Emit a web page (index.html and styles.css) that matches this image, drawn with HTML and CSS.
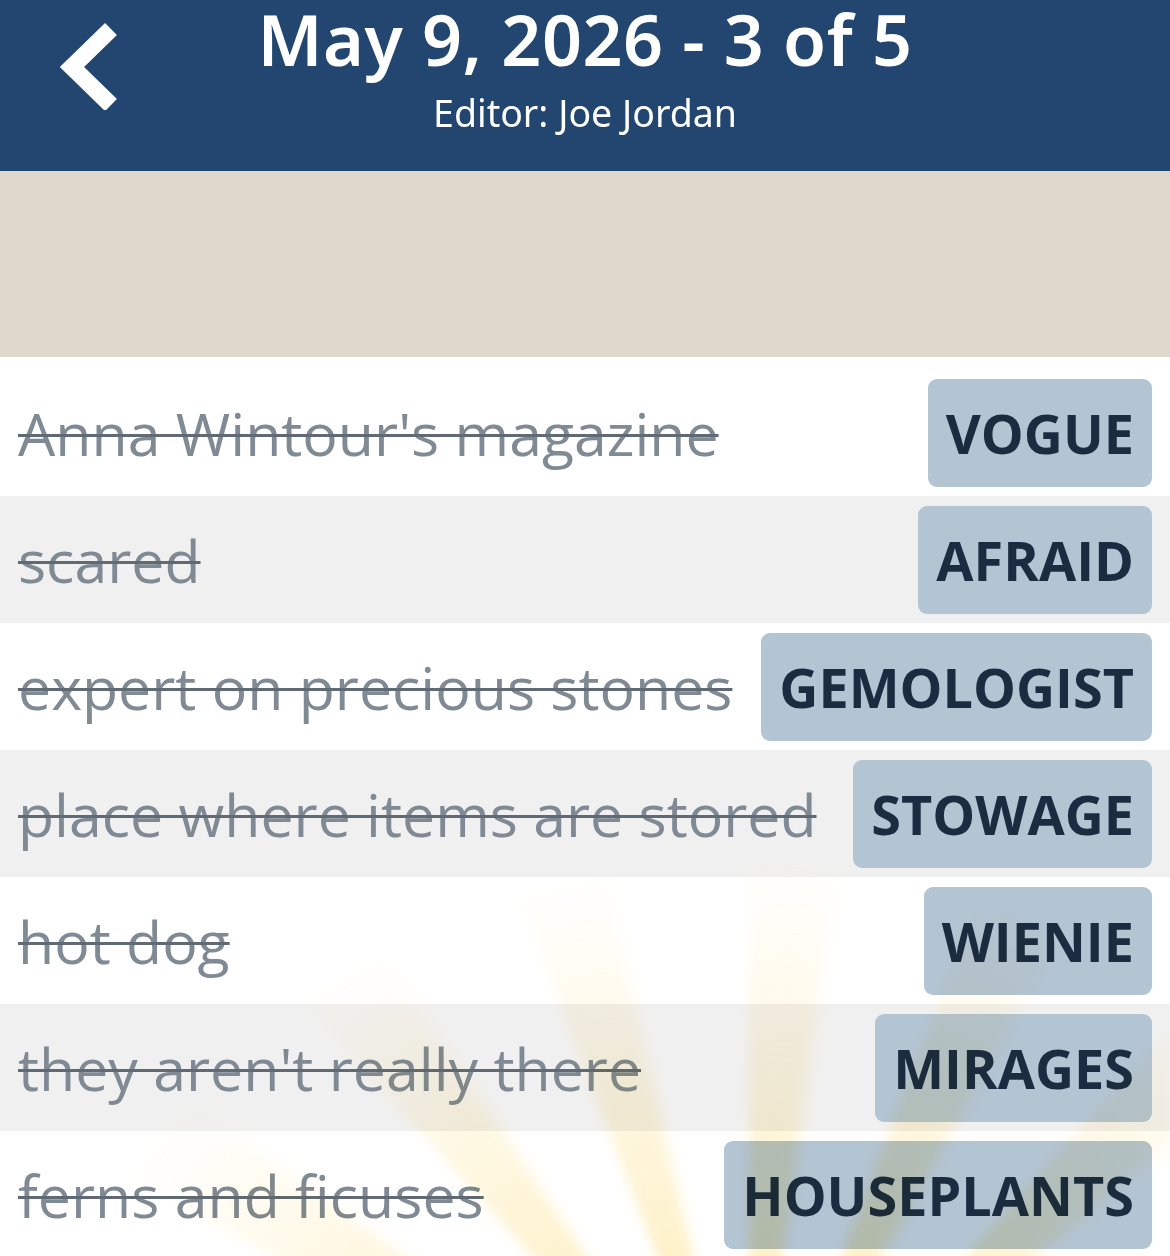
FILE: index.html
```html
<!DOCTYPE html>
<html lang="en">
<head>
    <meta charset="UTF-8">
    <title>Puzzle Review</title>
    <link rel="stylesheet" href="styles.css">
</head>
<body>
    <!-- Top bar with back arrow and puzzle info -->
    <header class="topbar">
        <a class="back" href="#">
            <svg width="70" height="100" viewBox="0 0 70 100">
                <polyline points="56,19 17,57 56,95" fill="none" stroke="#fff" stroke-width="17" stroke-linejoin="miter"/>
            </svg>
        </a>
        <div class="titles">
            <h1>May 9, 2026 - 3 of 5</h1>
            <p>Editor: Joe Jordan</p>
        </div>
    </header>

    <div class="banner"></div>

    <div class="answers">
        <div class="row"><span class="clue">Anna Wintour's magazine</span><span class="word">VOGUE</span></div>
        <div class="row"><span class="clue">scared</span><span class="word">AFRAID</span></div>
        <div class="row"><span class="clue">expert on precious stones</span><span class="word">GEMOLOGIST</span></div>
        <div class="row"><span class="clue">place where items are stored</span><span class="word">STOWAGE</span></div>
        <div class="row"><span class="clue">hot dog</span><span class="word">WIENIE</span></div>
        <div class="row"><span class="clue">they aren't really there</span><span class="word">MIRAGES</span></div>
        <div class="row"><span class="clue">ferns and ficuses</span><span class="word">HOUSEPLANTS</span></div>
        <!-- sun rays drawn over the list -->
        <div class="rays"></div>
    </div>
</body>
</html>
```

FILE: styles.css
```css
body { margin: 0; background: #fff; font-family: "Open Sans", sans-serif; overflow: hidden; }

.topbar { position: relative; height: 171px; background: #224670; color: #fff; display: flex; justify-content: center; }
.back { position: absolute; left: 55px; top: 10px; }
.titles { text-align: center; font-family: "Noto Sans", sans-serif; padding-top: 4px; }
.titles h1 { margin: 0; font-size: 70px; font-weight: 600; line-height: 70px; letter-spacing: 0.5px; }
.titles p { margin: 0; font-size: 37.5px; line-height: 78px; }

.banner { height: 186px; background: #dfd9cd; }

.answers { position: relative; padding-top: 12px; height: 887px; overflow: hidden; }
.row { height: 127px; box-sizing: border-box; padding: 0 18px; display: flex; align-items: center; justify-content: space-between; gap: 20px; }
.row:nth-child(even) { background: #f0f0f0; }
.clue { font-size: 59px; color: #808a94; text-decoration: line-through; text-decoration-color: #5f6a74; text-decoration-thickness: 3px; white-space: nowrap; }
.word { height: 108px; display: flex; align-items: center; padding: 0 18px; border-radius: 9px; background: #b3c4d3; color: #1b2c40; font-size: 54px; font-weight: 700; white-space: nowrap; }

.rays {
    position: absolute; left: 0; right: 0; top: 440px; height: 700px; pointer-events: none;
    background: repeating-conic-gradient(from -84deg at 64% 100%, rgba(252, 222, 130, 0.45) 0deg 7deg, transparent 9deg 21deg);
    -webkit-mask-image: radial-gradient(ellipse 720px 640px at 64% 100%, #000 35%, transparent 100%);
    mask-image: radial-gradient(ellipse 720px 640px at 64% 100%, #000 35%, transparent 100%);
    mix-blend-mode: multiply;
    filter: blur(6px);
}
```
